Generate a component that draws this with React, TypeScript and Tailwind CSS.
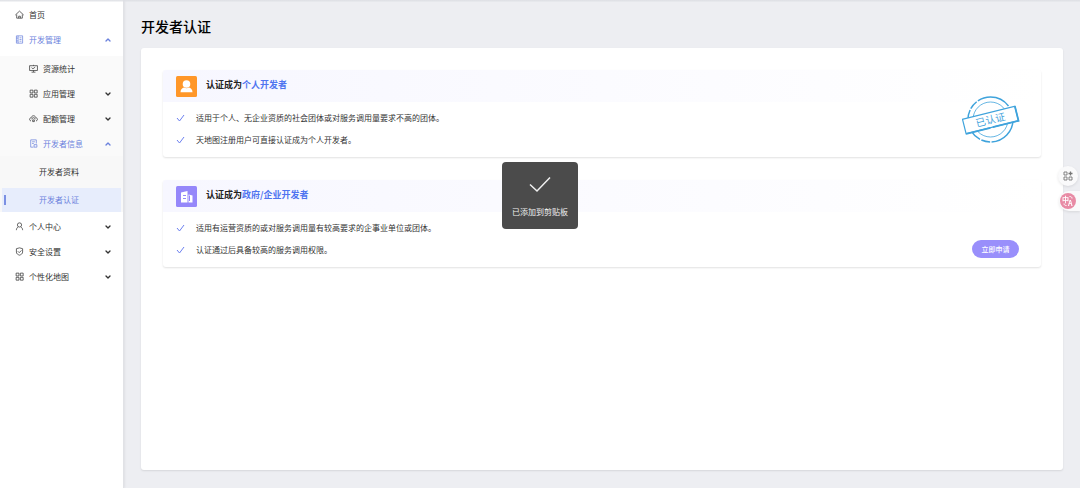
import type { ReactNode } from 'react'
import { ChevronDown, ChevronUp } from 'lucide-react'
import clsx from 'clsx'

type IconName = 'home' | 'manage' | 'stats' | 'grid' | 'quota' | 'doc' | 'user' | 'shield'

interface MenuItem {
  label: string
  icon: IconName
  arrow?: 'up' | 'down'
  active?: boolean
}

const devMenu: MenuItem[] = [
  { label: '资源统计', icon: 'stats' },
  { label: '应用管理', icon: 'grid', arrow: 'down' },
  { label: '配额管理', icon: 'quota', arrow: 'down' },
  { label: '开发者信息', icon: 'doc', arrow: 'up', active: true },
]

const bottomMenu: MenuItem[] = [
  { label: '个人中心', icon: 'user', arrow: 'down' },
  { label: '安全设置', icon: 'shield', arrow: 'down' },
  { label: '个性化地图', icon: 'grid', arrow: 'down' },
]

export default function App() {
  return (
    <div className="flex min-h-screen bg-[#edeef2] font-['Noto_Sans_CJK_SC',sans-serif] text-[8px] text-[#333]">
      <div className="fixed inset-x-0 top-0 z-10 h-0.5 bg-linear-to-b from-[#dcdee3] to-[#dcdee3]/20" />
      <Sidebar />

      <main className="flex min-w-0 flex-1 flex-col px-[17px] pt-[14px] pb-[18px]">
        <h1 className="mb-[10px] text-[14px] leading-6 font-medium text-black">开发者认证</h1>
        <div className="flex flex-1 flex-col gap-[23px] rounded-[3px] bg-white p-[22px] shadow-[0_1px_2px_rgba(0,0,0,0.1)]">
          <CertCard
            icon={<PersonIcon />}
            target="个人开发者"
            items={[
              '适用于个人、无企业资质的社会团体或对服务调用量要求不高的团体。',
              '天地图注册用户可直接认证成为个人开发者。',
            ]}
            badge={<Stamp />}
          />
          <CertCard
            icon={<BuildingIcon />}
            target="政府/企业开发者"
            items={[
              '适用有运营资质的或对服务调用量有较高要求的企事业单位或团体。',
              '认证通过后具备较高的服务调用权限。',
            ]}
            action={
              <button type="button" className="mr-[22px] mb-[3px] h-[18px] w-[47px] self-end rounded-full bg-[#998ffb] text-[7px] font-medium text-white">
                立即申请
              </button>
            }
          />
        </div>
      </main>

      {/* Toast */}
      <div role="status" className="fixed top-[162px] left-1/2 flex h-[67px] w-[76px] -translate-x-1/2 flex-col items-center rounded-[4px] bg-[#4b4b4b] pt-[14px] text-[#f0f0f0]">
        <svg viewBox="0 0 22 17" className="h-[17px] w-[22px]" fill="none" stroke="currentColor" strokeWidth="1.5">
          <path d="M1 8.5l7 6.5L21 1.5" />
        </svg>
        <p className="mt-[13px] leading-3">已添加到剪贴板</p>
      </div>

      <FloatingTools />
    </div>
  )
}

// ── Sidebar ───────────────────────────────────────────────────────────────────

function Sidebar() {
  return (
    <nav className="w-[124px] shrink-0 border-r border-[#e1e2e6] bg-white pt-0.5 shadow-[1px_0_2px_rgba(0,0,0,0.06)]">
      <MenuRow item={{ label: '首页', icon: 'home' }} />
      <MenuRow item={{ label: '开发管理', icon: 'manage', arrow: 'up', active: true }} />
      <div className="mt-1 bg-[#fafafa]">
        {devMenu.map(item => (
          <MenuRow key={item.label} item={item} nested />
        ))}
        <div className="flex flex-col gap-1 bg-[#f8f8f8] pt-1">
          <a href="#profile" className="flex h-6 items-center pl-[39px]">开发者资料</a>
          <a href="#cert" className="mx-0.5 flex h-6 items-center gap-[33px] bg-[#e7edfc] pl-0.5 text-[#6b82dd]">
            <span className="h-[10px] w-0.5 bg-[#7b90e3]" />
            开发者认证
          </a>
        </div>
      </div>
      <div className="pt-0.5">
        {bottomMenu.map(item => (
          <MenuRow key={item.label} item={item} />
        ))}
      </div>
    </nav>
  )
}

function MenuRow({ item, nested }: { item: MenuItem; nested?: boolean }) {
  const Arrow = item.arrow === 'up' ? ChevronUp : ChevronDown
  return (
    <a
      href="#menu"
      className={clsx(
        'flex h-[25px] items-center gap-[5px] pr-[11px]',
        nested ? 'pl-[29px]' : 'pl-[15px]',
        item.active && 'text-[#6b82dd]',
      )}
    >
      <MenuIcon name={item.icon} />
      <span className="flex-1">{item.label}</span>
      {item.arrow && <Arrow className="h-2 w-2" strokeWidth={4} />}
    </a>
  )
}

const iconShapes: Record<IconName, ReactNode> = {
  home: <path d="M.5 9L8 2l7.5 7M3 8v6.500h10V8M6.500 14.500V11h3v3.500" />,
  manage: <path d="M2.5 1.5h11v13h-11zM5.5 1.500v13M8 5h3.500M8 8h3.500M8 11h3.500M2.500 5.500h3M2.500 10.500h3" />,
  stats: <path d="M1 3h14v8.500H1zM8 11.500V14M4.500 14.500h7M4.500 6.500l2.500 2 4-3M8 1.500V3" />,
  grid: <path d="M2 2h5v5H2zM9.5 2h5v5h-5zM2 9.5h5v5H2zM9.5 9.5h5v5h-5z" />,
  quota: <path d="M3.500 12.500C2 12 1 11 1 9.500S2.500 6.500 4 6.500C4.500 4.500 6 3 8 3s3.500 1.500 4 3.500c1.500 0 3 1.500 3 3s-1 2.500-2.500 3M5 9.500a3 3 0 016 0M6.500 13.500v-3h3v3z" />,
  doc: <path d="M13 8V1.500H3v13h5M5.500 5h5M5.500 8h3M9 10h5v4.500H9z" />,
  user: <path d="M8 1.500a3.500 3.500 0 100 7.500 3.500 3.500 0 000-7.500zM5.500 9C3.500 10 2.500 12 2.500 14.500M10.500 9c2 1 3 3 3 5.500" />,
  shield: <path d="M8 1.500l5.500 1.500v6c0 3-2.500 4.500-5.500 5.500C5 13.500 2.500 12 2.500 9V3zM5 7.500l2.500 2.500 4-4" />,
}

function MenuIcon({ name }: { name: IconName }) {
  return (
    <svg viewBox="0 0 16 16" className="h-[9px] w-[9px] shrink-0" fill="none" stroke="currentColor" strokeWidth="1.3">
      {iconShapes[name]}
    </svg>
  )
}

// ── Certification card ────────────────────────────────────────────────────────

interface CertCardProps {
  icon: ReactNode
  target: string
  items: string[]
  badge?: ReactNode
  action?: ReactNode
}

function CertCard({ icon, target, items, badge, action }: CertCardProps) {
  return (
    <section className="relative rounded-[3px] shadow-[0_1px_2px_rgba(0,0,0,0.12)]">
      <div className="flex h-8 items-center gap-[9px] rounded-t-[3px] bg-linear-to-r from-[#f7f7ff] to-white pl-[13px]">
        {icon}
        <h2 className="pb-0.5 text-[9px] font-bold text-[#222]">
          认证成为<span className="text-[#4f74f0]">{target}</span>
        </h2>
      </div>
      <div className="flex justify-between pt-[5px] pb-[6px] pl-[13px]">
        <ul>
          {items.map(text => (
            <li key={text} className="flex h-[22px] items-center gap-[11px]">
              <svg viewBox="0 0 9 8" className="h-2 w-[9px]" fill="none" stroke="#6b7ff0">
                <path d="M1 4l2.500 3L8 1" />
              </svg>
              {text}
            </li>
          ))}
        </ul>
        {action}
      </div>
      {badge && <div className="absolute top-[25px] right-[21px]">{badge}</div>}
    </section>
  )
}

function PersonIcon() {
  return (
    <svg viewBox="0 0 21 21" className="h-[21px] w-[21px]">
      <rect width="21" height="21" rx="1.5" fill="#ff9729" />
      <circle cx="10.5" cy="8" r="3.8" fill="#fff" />
      <path d="M4.5 16.300c0-3 1.800-4.500 3.500-4.800 1.500 1 3.500 1 5 0 1.700.3 3.500 1.800 3.500 4.800z" fill="#fff" />
    </svg>
  )
}

function BuildingIcon() {
  return (
    <svg viewBox="0 0 21 21" className="h-[21px] w-[21px]">
      <rect width="21" height="21" rx="1.5" fill="#9587fa" />
      <path d="M5 6.500L11.500 5v11.500H5zM12.500 8.500L16.500 9.500v7h-4z" fill="#fff" />
      <path d="M7 9.500h3M7 12.500h3" stroke="#9587fa" strokeWidth="1.2" />
      <path d="M13.500 9.500v5.500" stroke="#9587fa" />
    </svg>
  )
}

function Stamp() {
  return (
    <svg viewBox="0 0 58 50" className="h-[50px] w-[58px]" fill="none" stroke="#3fa3dc">
      <circle cx="28.5" cy="24.5" r="22.5" strokeWidth="1.5" strokeDasharray="34 1.500 9 1.500" />
      <circle cx="28.5" cy="24.5" r="17.5" strokeWidth="0.8" />
      <g transform="rotate(-14 28.5 25)">
        <rect x="1.5" y="17.5" width="54" height="15" fill="#fff" strokeWidth="1.2" />
        <path d="M1.500 32.500h25M29 32.500h26.500v-15" strokeWidth="1.8" />
        <text x="28.5" y="28.5" textAnchor="middle" fontSize="10" fill="#3fa3dc" stroke="none">已认证</text>
      </g>
    </svg>
  )
}

// ── Floating tools on the right edge ──────────────────────────────────────────

function FloatingTools() {
  return (
    <div className="fixed top-[166px] right-0 flex flex-col items-end gap-[5px]">
      <button type="button" aria-label="工具" className="mr-0.5 flex h-5 w-5 items-center justify-center rounded-full bg-[#fafafb] shadow-[0_1px_3px_rgba(0,0,0,0.1)]">
        <svg viewBox="0 0 10 10" className="h-[10px] w-[10px]" fill="none" stroke="#777" strokeWidth="0.9">
          <path d="M1 1h3v3H1zM1 6h3v3H1zM6 6h3v3H6z" />
          <path d="M7.5.5v4M5.5 2.5h4" strokeWidth="1.3" />
        </svg>
      </button>
      <button type="button" aria-label="翻译" className="flex h-5 w-[21px] items-center rounded-l-full bg-[#fafafb] pl-px shadow-[0_1px_3px_rgba(0,0,0,0.1)]">
        <svg viewBox="0 0 16 16" className="h-4 w-4" fill="none" stroke="#fff">
          <circle cx="8" cy="8" r="8" fill="#e88ba5" stroke="none" />
          <text x="2" y="9" fontSize="7" fontWeight="700" fill="#fff" stroke="none">中</text>
          <text x="8" y="13" fontSize="7" fontWeight="700" fill="#fff" stroke="none">A</text>
          <path d="M9.5 3.500c1.500 0 2.500.5 2.500 2M4 10.500c0 1.500 1 2 2.500 2" />
        </svg>
      </button>
    </div>
  )
}
